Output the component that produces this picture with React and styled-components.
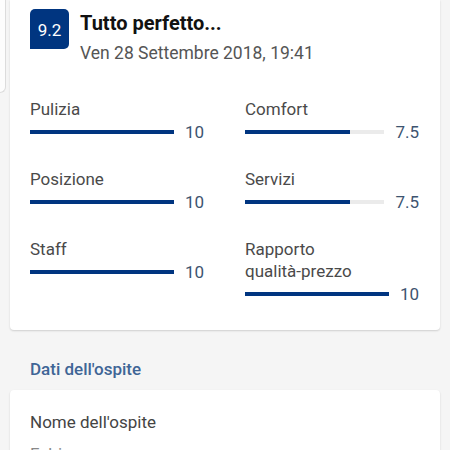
import React from "react";
import styled, { createGlobalStyle } from "styled-components";

const Global = createGlobalStyle`
  html, body { margin: 0; padding: 0; }
  body {
    background: #f5f5f5;
    font-family: Roboto, "Liberation Sans", sans-serif;
    -webkit-font-smoothing: antialiased;
  }
`;

const Page = styled.div`
  width: 450px;
  height: 450px;
  overflow: hidden;
  background: #f5f5f5;
`;

const TopRow = styled.div`
  display: flex;
  align-items: flex-start;
`;

const Sliver = styled.div`
  width: 5px;
  height: 92px;
  background: #fdfdfd;
  border-right: 1px solid #dcdcdc;
  border-bottom: 1px solid #dcdcdc;
  border-bottom-right-radius: 6px;
  flex-shrink: 0;
`;

const Card = styled.div`
  margin-left: 4px;
  width: 430px;
  box-sizing: border-box;
  background: #fff;
  border-radius: ${(p) => (p.$open ? "0 0 4px 4px" : "4px")};
  box-shadow: 0 1px 2px rgba(0, 0, 0, 0.16);
  padding: ${(p) => p.$pad};
`;

const Card2 = styled(Card)`
  margin: 9px 10px 0 10px;
`;

const Header = styled.div`
  display: flex;
  gap: 11px;
  align-items: flex-start;
`;

const Badge = styled.div`
  width: 39px;
  height: 40px;
  flex-shrink: 0;
  background: #003580;
  color: #fff;
  border-radius: 5px 5px 5px 0;
  display: flex;
  align-items: center;
  justify-content: center;
  font-size: 17px;
  padding-top: 1px;
  box-sizing: border-box;
`;

const Titles = styled.div`
  display: flex;
  flex-direction: column;
`;

const Title = styled.div`
  font-size: 20px;
  line-height: 28px;
  font-weight: 700;
  color: #111;
`;

const DateText = styled.div`
  margin-top: 2px;
  font-size: 17.5px;
  line-height: 28px;
  color: #555;
`;

const Grid = styled.div`
  margin-top: 31px;
  display: grid;
  grid-template-columns: 1fr 1fr;
  column-gap: 41px;
  row-gap: 24px;
  padding-right: 1px;
`;

const Item = styled.div`
  display: flex;
  flex-direction: column;
`;

const Label = styled.div`
  font-size: 17px;
  line-height: 22px;
  color: #4a4a4a;
`;

const BarRow = styled.div`
  display: flex;
  align-items: center;
  gap: 11px;
  height: 24px;
`;

const Track = styled.div`
  flex: 1;
  height: 4px;
  background: #ebebeb;
  overflow: hidden;
`;

const Fill = styled.div`
  height: 100%;
  background: #003580;
`;

const Value = styled.div`
  font-size: 17px;
  line-height: 24px;
  color: #3d5470;
`;

const SectionTitle = styled.div`
  margin-top: 27px;
  padding: 0 30px;
  font-size: 17px;
  line-height: 24px;
  font-weight: 500;
  color: #3f6596;
`;

const FieldLabel = styled.div`
  font-size: 17px;
  line-height: 24px;
  color: #444;
`;

const FieldValue = styled.div`
  margin-top: 8px;
  font-size: 17px;
  line-height: 24px;
  color: #888;
`;

const ratings = [
  { label: "Pulizia", value: "10", pct: 100 },
  { label: "Comfort", value: "7.5", pct: 75 },
  { label: "Posizione", value: "10", pct: 100 },
  { label: "Servizi", value: "7.5", pct: 75 },
  { label: "Staff", value: "10", pct: 100 },
  { label: "Rapporto\nqualità-prezzo", value: "10", pct: 100 },
];

export default function App() {
  return (
    <Page>
      <Global />
      <TopRow>
        <Sliver />
        <Card $open $pad="9px 20px 24px 20px">
          <Header>
            <Badge>9.2</Badge>
            <Titles>
              <Title>Tutto perfetto...</Title>
              <DateText>Ven 28 Settembre 2018, 19:41</DateText>
            </Titles>
          </Header>
          <Grid>
            {ratings.map((r) => (
              <Item key={r.label}>
                {r.label.split("\n").map((l) => (
                  <Label key={l}>{l}</Label>
                ))}
                <BarRow>
                  <Track>
                    <Fill style={{ width: `${r.pct}%` }} />
                  </Track>
                  <Value>{r.value}</Value>
                </BarRow>
              </Item>
            ))}
          </Grid>
        </Card>
      </TopRow>
      <SectionTitle>Dati dell'ospite</SectionTitle>
      <Card2 $pad="20px 20px 20px 20px">
        <FieldLabel>Nome dell'ospite</FieldLabel>
        <FieldValue>Fabio</FieldValue>
      </Card2>
    </Page>
  );
}
